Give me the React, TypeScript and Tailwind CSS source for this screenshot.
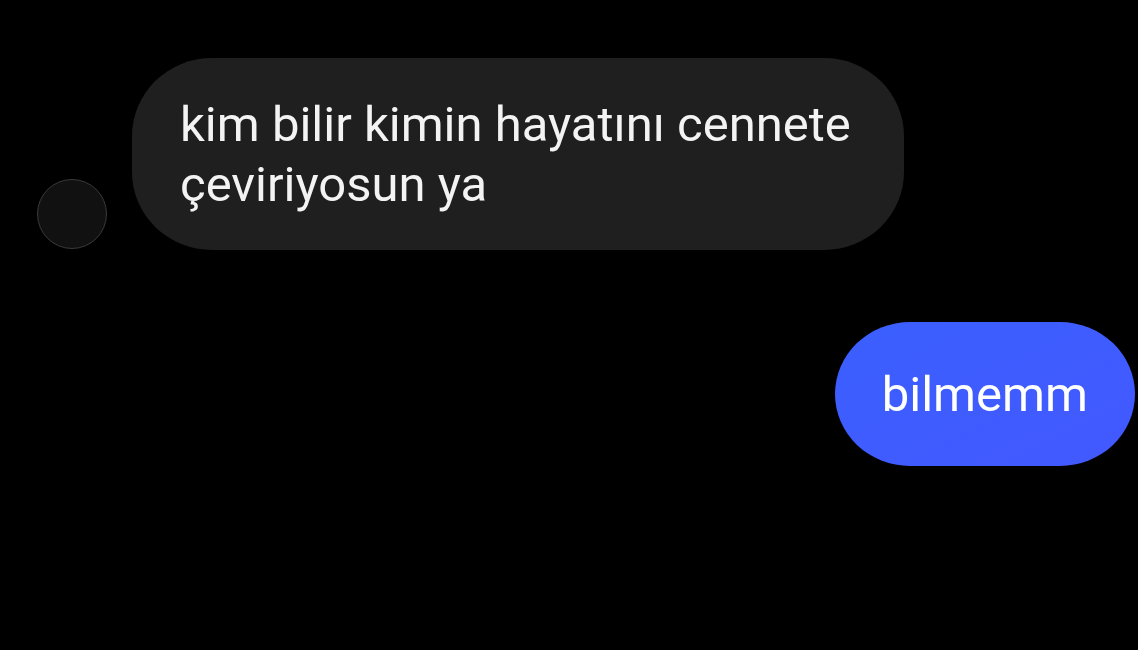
const incoming = "kim bilir kimin hayatını cennete çeviriyosun ya";
const outgoing = "bilmemm";

export default function App() {
  return (
    <main className="flex min-h-screen flex-col gap-[72px] bg-black pt-[58px] pr-[3px] pl-[37px] font-[Roboto,sans-serif] text-[49px] leading-[60px] text-[#f3f3f3]">
      <div className="flex items-end gap-[25px]">
        <div className="mb-px size-[70px] shrink-0 rounded-full border border-[#3a3a3a] bg-[#111111]" />
        <p className="max-w-[772px] rounded-[80px/78px] bg-[#1f1f1f] px-12 pt-[37px] pb-[35px]">
          {incoming}
        </p>
      </div>
      <p className="self-end rounded-[75px/72px] bg-linear-to-br from-[#3b5fff] to-[#4259ff] px-[47px] pt-[43px] pb-[41px] text-white">
        {outgoing}
      </p>
    </main>
  );
}
